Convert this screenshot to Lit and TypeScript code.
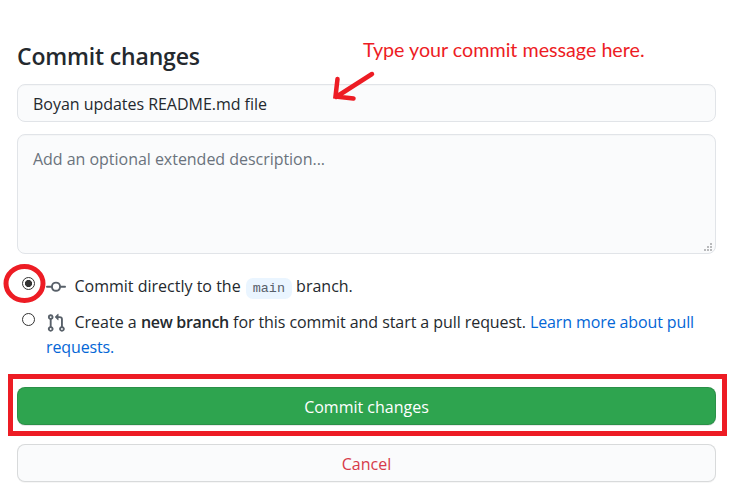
import { LitElement, html, css } from "lit";

class AppRoot extends LitElement {
  static styles = css`
    :host {
      display: block;
      position: relative;
      box-sizing: border-box;
      width: 732px;
      height: 498px;
      overflow: hidden;
      padding: 40px 16px 0 17px;
      background: #fff;
      color: #24292e;
      font: 16px/25px "Open Sans", "Noto Sans", sans-serif;
    }
    * { box-sizing: border-box; }
    h1 {
      margin: 0 0 11px;
      font-size: 23px;
      line-height: 33px;
      font-weight: 600;
      letter-spacing: -0.17px;
    }
    .field {
      border: 1px solid #e1e4e8;
      border-radius: 8px;
      background: #fafbfc;
      padding: 7px 15px;
      letter-spacing: -0.03px;
      box-shadow: inset 0 1px 0 rgba(225, 228, 232, 0.2);
    }
    .subject { height: 38px; }
    .description {
      position: relative;
      height: 120px;
      margin-top: 12px;
      padding-top: 12px;
      color: #6a737d;
    }
    .grip { position: absolute; right: 3px; bottom: 2px; width: 8px; height: 8px; fill: #b9babc; }
    .choices { margin-top: 20px; }
    .choice { display: flex; height: 36px; }
    .choice + .choice { height: 50px; }
    .radio {
      flex: none;
      width: 13px;
      height: 13px;
      margin: 3px 11px 0 5px;
      border: 1px solid #333;
      border-radius: 50%;
      background: #fff;
    }
    .checked { background: radial-gradient(circle, #333 3.2px, #fff 3.9px); }
    .label { flex: 1; white-space: nowrap; }
    .icon { width: 20px; height: 20px; fill: #586069; vertical-align: -5px; margin-right: 8.5px; }
    .branch {
      display: inline-block;
      height: 21px;
      margin: 0 0 0 1px;
      padding: 0 7px;
      border-radius: 7px;
      background: #eaf5ff;
      color: #57606a;
      font: 13.4px/21px "Liberation Mono", monospace;
    }
    b { font-weight: 600; letter-spacing: -0.3px; }
    .tight { letter-spacing: -0.07px; }
    .link { color: #0366d6; letter-spacing: -0.12px; }
    .button {
      height: 38px;
      border: 1px solid rgba(27, 31, 35, 0.15);
      border-radius: 8px;
      text-align: center;
      line-height: 38px;
    }
    .primary {
      margin-top: 27px;
      background: #2ea44f;
      color: #fff;
      box-shadow: 0 1px 0 rgba(27, 31, 35, 0.1);
    }
    .cancel {
      margin-top: 19px;
      background: #fafbfc;
      color: #d73a49;
      box-shadow: 0 1px 0 rgba(27, 31, 35, 0.04);
    }
    .note {
      position: absolute;
      left: 363px;
      top: 37px;
      color: #ed1c24;
      font: 19.7px/25px Lato, sans-serif;
      white-space: nowrap;
    }
    .marks { position: absolute; inset: 0; width: 732px; height: 498px; fill: none; stroke: #ed1c24; pointer-events: none; }
  `;

  render() {
    return html`
      <h1>Commit changes</h1>
      <div class="field subject">Boyan updates README.md file</div>
      <div class="field description">
        Add an optional extended description...
        <svg class="grip" viewBox="0 0 8 8"><path d="M6 0h2v2H6zM3 3h2v2H3zM6 3h2v2H6zM0 6h2v2H0zM3 6h2v2H3zM6 6h2v2H6z" /></svg>
      </div>
      <div class="choices">
        <div class="choice">
          <span class="radio checked"></span>
          <div class="label"><svg class="icon" viewBox="0 0 16 16"><path fill-rule="evenodd" d="M10.5 7.75a2.5 2.5 0 11-5 0 2.5 2.5 0 015 0zm1.43.75a4.002 4.002 0 01-7.86 0H.75a.75.75 0 110-1.5h3.32a4.001 4.001 0 017.86 0h3.32a.75.75 0 110 1.5h-3.32z" /></svg>Commit directly to the <span class="branch">main</span> branch.</div>
        </div>
        <div class="choice">
          <span class="radio"></span>
          <div class="label"><svg class="icon" viewBox="0 0 16 16"><path fill-rule="evenodd" d="M7.177 3.073L9.573.677A.25.25 0 0110 .854v4.792a.25.25 0 01-.427.177L7.177 3.427a.25.25 0 010-.354zM3.75 2.5a.75.75 0 100 1.5.75.75 0 000-1.5zm-2.25.75a2.25 2.25 0 113 2.122v5.256a2.251 2.251 0 11-1.5 0V5.372A2.25 2.25 0 011.5 3.25zM11 2.5h-1V4h1a1 1 0 011 1v5.628a2.251 2.251 0 101.5 0V5A2.5 2.5 0 0011 2.5zm1 10.25a.75.75 0 111.5 0 .75.75 0 01-1.5 0zM3.75 12a.75.75 0 100 1.5.75.75 0 000-1.5z" /></svg>Create a <b>new branch</b> <span class="tight">for this commit and start a pull request.</span> <span class="link">Learn more about pull<br />requests.</span></div>
        </div>
      </div>
      <div class="button primary">Commit changes</div>
      <div class="button cancel">Cancel</div>
      <div class="note">Type your commit message here.</div>
      <svg class="marks" viewBox="0 0 732 498">
        <rect x="10.5" y="376.5" width="714" height="57" stroke-width="5" />
        <ellipse cx="24.5" cy="283.5" rx="18.500" ry="17" stroke-width="5" />
        <path d="M372 74L336 97M337.500 79L335.500 96.500L353.500 98.500" stroke-width="4.500" stroke-linecap="round" stroke-linejoin="miter" />
      </svg>
    `;
  }
}
customElements.define("app-root", AppRoot);
